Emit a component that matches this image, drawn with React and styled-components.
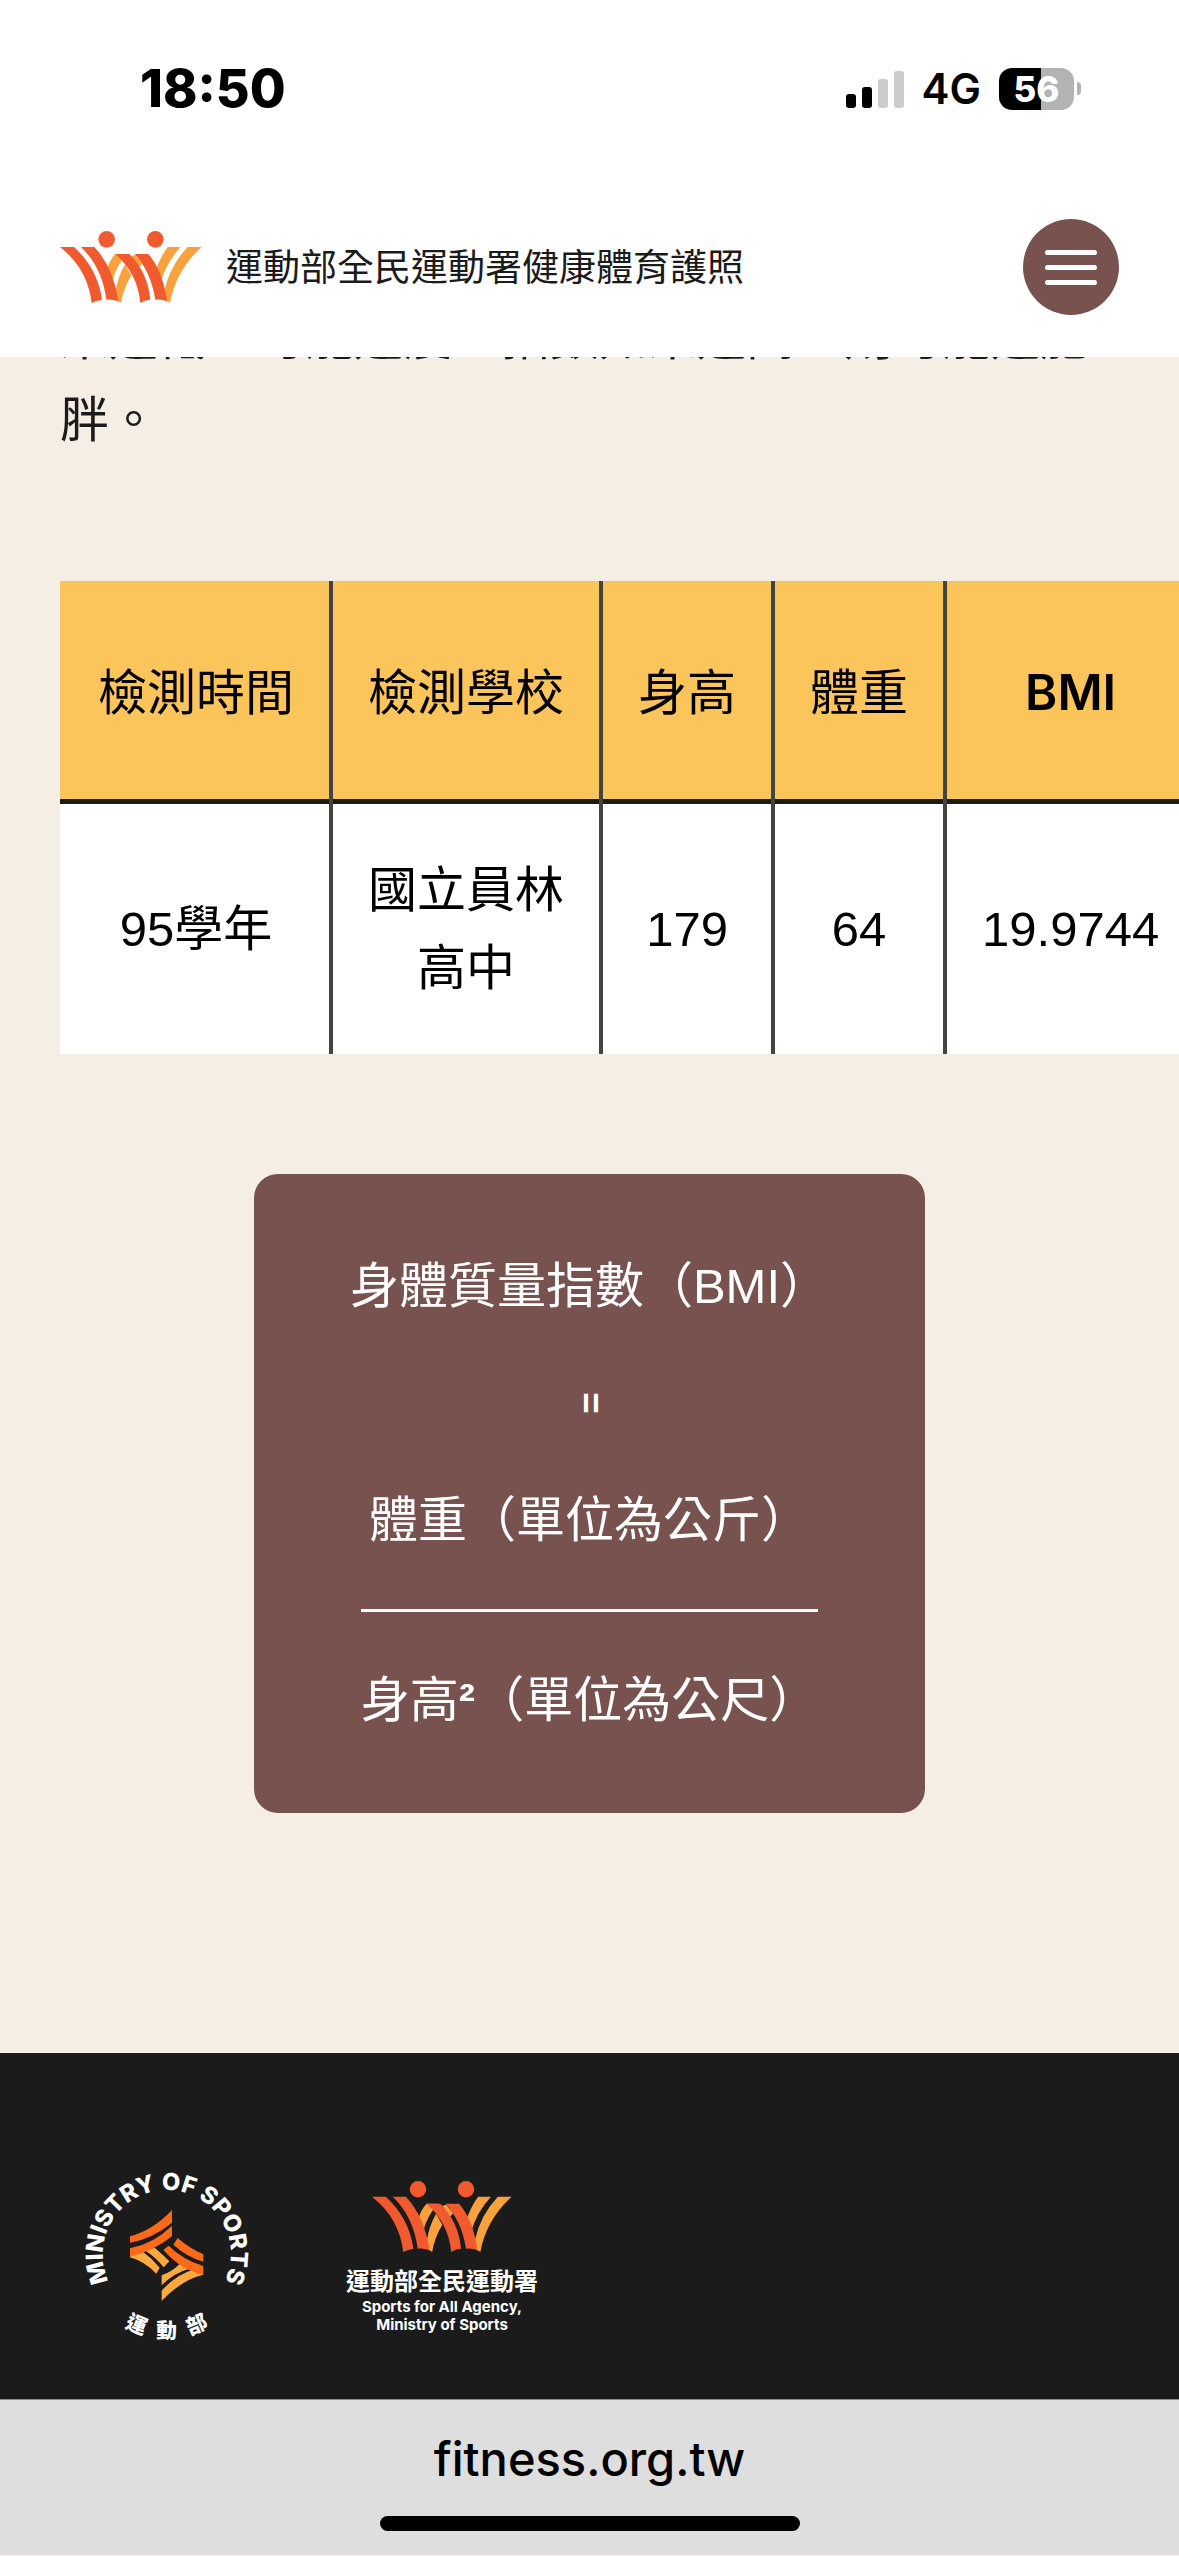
import React from "react";
import styled, { createGlobalStyle } from "styled-components";

const records = [
  {
    term: "95學年",
    school: "國立員林高中",
    height: "179",
    weight: "64",
    bmi: "19.9744",
  },
];

const WaveMark = ({ width }) => (
  <svg width={width} viewBox="62 62 426 217" aria-hidden="true">
    <g fill="#f9a13c">
      <path d="M228 131H263Q232 165 218 212L203 178Q210 150 228 131Z" />
      <path d="M257 162L276 195Q252 235 245 278L236 272L228 248Q235 200 257 162Z" />
      <path d="M288 134L309 160L298 172L276 137Z" />
      <path d="M385 110H424Q382 155 364 215L350 178Q363 140 385 110Z" />
      <path d="M445 110H487Q410 180 392 277L380 272L374 245Q392 165 445 110Z" />
    </g>
    <g fill="#f15a2f">
      <circle cx="202" cy="87" r="25" />
      <circle cx="348" cy="87" r="25" />
      <path d="M62 110H104Q175 175 188 268Q172 270 157 278Q145 175 62 110Z" />
      <path d="M125 110H165Q222 170 237 273Q218 266 201 268Q188 170 125 110Z" />
      <path d="M228 131H270Q325 185 333 268Q318 268 303 278Q295 190 228 131Z" />
      <path d="M286 131H327Q370 180 383 273Q366 266 348 268Q335 185 286 131Z" />
    </g>
  </svg>
);

const MinistrySeal = () => (
  <svg width="220" height="220" viewBox="0 0 660 660" role="img" aria-label="運動部">
    <path id="seal-arc" d="M320 507A192 192 0 1 1 321 507" fill="none" />
    <SealText fontSize="71">
      <textPath href="#seal-arc" startOffset="50%" textAnchor="middle">
        MINISTRY OF SPORTS
      </textPath>
    </SealText>
    <SealText fontSize="62" textAnchor="middle" x="320" y="567">
      動
    </SealText>
    <SealText fontSize="62" textAnchor="middle" x="320" y="567" transform="rotate(23 320 314)">
      運
    </SealText>
    <SealText fontSize="62" textAnchor="middle" x="320" y="567" transform="rotate(-23 320 314)">
      部
    </SealText>
    <g fill="#ffa940">
      <path d="M210 316L246 306Q276 328 299 356L289 374Q255 338 210 325Z" />
      <path d="M253 303L284 296Q308 316 328 337L311 355Q288 325 253 303Z" />
      <path d="M305 379Q336 368 359 345L388 359Q340 372 305 409Z" />
      <path d="M305 425Q350 375 400 362L430 377Q365 392 305 456Z" />
    </g>
    <g fill="#ff6a1a">
      <path d="M210 262Q280 243 336 183V221Q280 268 210 281Z" />
      <path d="M210 298Q282 283 336 230V262Q280 307 210 323Z" />
      <path d="M353 267Q388 298 430 316V338Q382 325 340 287Z" />
      <path d="M326 290Q368 332 430 351V378Q362 362 310 303Z" />
    </g>
  </svg>
);

const App = () => {
  return (
    <>
      <GlobalStyle />
      <Header>
        <StatusBar>
          <Clock>18:50</Clock>
          <StatusIcons>
            <svg width="58" height="38" viewBox="0 0 58 38" aria-hidden="true">
              <rect x="0" y="24" width="10" height="14" rx="3" />
              <rect x="16" y="17" width="10" height="21" rx="3" />
              <rect x="32" y="9" width="10" height="29" rx="3" fill="#ccc" />
              <rect x="48" y="1" width="10" height="37" rx="3" fill="#ccc" />
            </svg>
            <Network>4G</Network>
            <Battery>
              <BatteryLevel>56</BatteryLevel>
              <BatteryTip />
            </Battery>
          </StatusIcons>
        </StatusBar>
        <NavBar>
          <Brand href="#">
            <WaveMark width={142} />
            <BrandName>運動部全民運動署健康體育護照</BrandName>
          </Brand>
          <MenuButton type="button" aria-label="選單">
            <MenuLine />
            <MenuLine />
            <MenuLine />
          </MenuButton>
        </NavBar>
      </Header>

      <Main>
        <Intro>
          果過低，可能過瘦，指數如果過高，則可能過肥胖。
        </Intro>
        <TableScroll>
          <Table>
            <thead>
              <tr>
                <HeadCell>檢測時間</HeadCell>
                <HeadCell>檢測學校</HeadCell>
                <HeadCell>身高</HeadCell>
                <HeadCell>體重</HeadCell>
                <HeadCell $latin>BMI</HeadCell>
              </tr>
            </thead>
            <tbody>
              {records.map((item) => (
                <tr key={item.term}>
                  <Cell>{item.term}</Cell>
                  <Cell>{item.school}</Cell>
                  <Cell>{item.height}</Cell>
                  <Cell>{item.weight}</Cell>
                  <Cell>{item.bmi}</Cell>
                </tr>
              ))}
            </tbody>
          </Table>
        </TableScroll>
        <Formula>
          <p>身體質量指數（BMI）</p>
          <Equals>=</Equals>
          <Fraction>
            <Numerator>體重（單位為公斤）</Numerator>
            <p>
              身高<Exponent>²</Exponent>（單位為公尺）
            </p>
          </Fraction>
        </Formula>
      </Main>

      <Footer>
        <MinistrySeal />
        <Agency>
          <WaveMark width={140} />
          <AgencyName>運動部全民運動署</AgencyName>
          <AgencyEnglish>
            Sports for All Agency,
            <br />
            Ministry of Sports
          </AgencyEnglish>
        </Agency>
      </Footer>

      <BrowserBar>
        <span>fitness.org.tw</span>
        <HomeIndicator />
      </BrowserBar>
    </>
  );
};

const GlobalStyle = createGlobalStyle`
  * {
    box-sizing: border-box;
  }

  body {
    margin: 0;
    background: #f5eee4;
    color: #1b1b1b;
    font-family: "Liberation Sans", "Noto Sans CJK TC", sans-serif;
    font-size: 49px;
    line-height: 78px;
    overflow-x: hidden;
  }

  p {
    margin: 0;
  }
`;

/* Status bar and navigation */
const Header = styled.header`
  position: relative;
  z-index: 1;
  background: #fff;
`;

const StatusBar = styled.div`
  display: flex;
  justify-content: space-between;
  align-items: center;
  height: 177px;
  padding: 0 98px 0 140px;
  color: #000;
  font-family: Inter, sans-serif;
`;

const Clock = styled.span`
  font-size: 52px;
  font-weight: 800;
`;

const StatusIcons = styled.div`
  display: flex;
  align-items: center;
  gap: 18px;
`;

const Network = styled.span`
  font-size: 42px;
  font-weight: 600;
`;

const Battery = styled.div`
  display: flex;
  align-items: center;
  gap: 3px;
`;

const BatteryLevel = styled.span`
  width: 75px;
  border-radius: 13px;
  background: linear-gradient(90deg, #000 56%, #b3b3b3 56%);
  color: #fff;
  font-size: 35px;
  font-weight: 800;
  line-height: 42px;
  text-align: center;
`;

const BatteryTip = styled.span`
  width: 4px;
  height: 13px;
  border-radius: 0 4px 4px 0;
  background: #b3b3b3;
`;

const NavBar = styled.nav`
  display: flex;
  justify-content: space-between;
  align-items: center;
  height: 180px;
  padding: 0 60px;
`;

const Brand = styled.a`
  display: flex;
  align-items: center;
  gap: 24px;
  color: #1b1b1b;
  font-size: 37px;
  text-decoration: none;
`;

const BrandName = styled.span`
  padding-top: 4px;
`;

const MenuButton = styled.button`
  display: flex;
  flex-direction: column;
  justify-content: center;
  align-items: center;
  gap: 10px;
  width: 96px;
  height: 96px;
  padding: 0;
  border: 0;
  border-radius: 50%;
  background: #78524e;
  cursor: pointer;
`;

const MenuLine = styled.span`
  width: 52px;
  height: 5px;
  border-radius: 3px;
  background: #fff;
`;

/* Content, scrolled partly under the header */
const Main = styled.main`
  margin-top: -60px;
  padding: 0 60px 240px;
`;

const Intro = styled.p`
  line-height: 82px;
`;

/* The table runs to the right edge of the window */
const TableScroll = styled.div`
  margin: 120px -60px 120px 0;
  overflow-x: hidden;
`;

const Table = styled.table`
  width: min-content;
  border-spacing: 0;
  background: #fff;
  color: #000;
  text-align: center;

  th + th,
  td + td {
    border-left: 4px solid #434341;
  }

  th:first-child,
  td:first-child {
    padding-left: 38px;
  }
`;

const HeadCell = styled.th`
  padding: 73px 35px 72px;
  background: #fcc55c;
  box-shadow: inset 0 -5px 0 #1b1b17;
  font-family: ${(props) => (props.$latin ? "Inter, sans-serif" : "inherit")};
  font-weight: ${(props) => (props.$latin ? 600 : 400)};
  white-space: nowrap;
`;

const Cell = styled.td`
  padding: 47px 35px;
`;

const Formula = styled.section`
  display: flex;
  flex-direction: column;
  align-items: center;
  gap: 39px;
  width: fit-content;
  margin: 0 auto;
  padding: 73px 96px 74px;
  border-radius: 24px;
  background: #78524e;
  color: #fff;
`;

const Equals = styled.p`
  transform: rotate(90deg);
  font-size: 37px;
  font-weight: 700;
`;

const Exponent = styled.span`
  font-weight: 700;
`;

const Fraction = styled.div`
  text-align: center;
`;

const Numerator = styled.p`
  margin-bottom: 49px;
  padding-bottom: 50px;
  border-bottom: 3px solid #fff;
`;

/* Footer */
const Footer = styled.footer`
  display: flex;
  align-items: flex-start;
  gap: 66px;
  padding: 96px 60px 30px;
  background: #1b1b1b;
  color: #fff;
`;

const SealText = styled.text`
  fill: #fff;
  font-family: Inter, "Noto Sans CJK TC", sans-serif;
  font-weight: 800;
`;

const Agency = styled.div`
  display: flex;
  flex-direction: column;
  align-items: center;
  padding-top: 32px;
  font-weight: 700;
  text-align: center;
`;

const AgencyName = styled.span`
  margin-top: 14px;
  font-size: 24px;
  line-height: 32px;
`;

const AgencyEnglish = styled.span`
  font-family: Inter, sans-serif;
  font-size: 15px;
  line-height: 18px;
`;

/* Browser chrome */
const BrowserBar = styled.div`
  display: flex;
  flex-direction: column;
  align-items: center;
  padding: 20px 0 24px;
  border-top: 1px solid #8e8c8d;
  background: #dedede;
  color: #000;
  font-family: Inter, sans-serif;
  font-size: 47px;
  font-weight: 500;
`;

const HomeIndicator = styled.span`
  width: 420px;
  height: 15px;
  margin-top: 18px;
  border-radius: 8px;
  background: #000;
`;

export default App;
